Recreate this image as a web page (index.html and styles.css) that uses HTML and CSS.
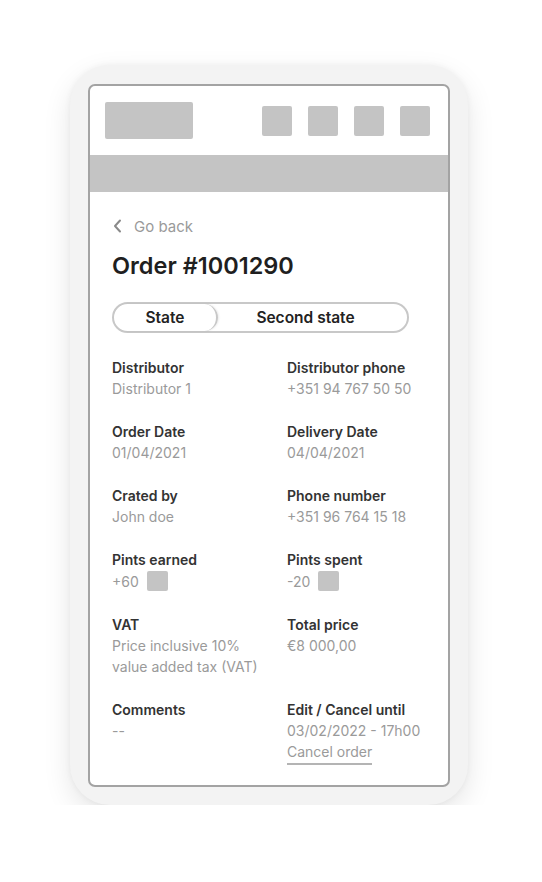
FILE: index.html
```html
<!DOCTYPE html>
<html lang="en">
<head>
  <meta charset="UTF-8" />
  <meta name="viewport" content="width=device-width, initial-scale=1" />
  <title>Order details</title>
  <link rel="stylesheet" href="styles.css">
</head>
<body>
  <div class="phone">
    <div class="screen">
      <header class="topbar">
        <div class="logo"></div>
        <div class="icons">
          <span class="icon"></span>
          <span class="icon"></span>
          <span class="icon"></span>
          <span class="icon"></span>
        </div>
      </header>
      <div class="subbar"></div>

      <main class="content">
        <a class="back" href="#">
          <svg width="9" height="14" viewBox="0 0 9 14"><path d="M7 1.5 L2 7 L7 12.5" fill="none" stroke="#8a8a8a" stroke-width="2" stroke-linecap="round" stroke-linejoin="round"/></svg>
          <span>Go back</span>
        </a>
        <h1>Order #1001290</h1>

        <div class="tabs">
          <div class="tab active">State</div>
          <div class="tab">Second state</div>
        </div>

        <div class="details">
          <div class="item">
            <div class="label">Distributor</div>
            <div class="value">Distributor 1</div>
          </div>
          <div class="item">
            <div class="label">Distributor phone</div>
            <div class="value">+351 94 767 50 50</div>
          </div>
          <div class="item">
            <div class="label">Order Date</div>
            <div class="value">01/04/2021</div>
          </div>
          <div class="item">
            <div class="label">Delivery Date</div>
            <div class="value">04/04/2021</div>
          </div>
          <div class="item">
            <div class="label">Crated by</div>
            <div class="value">John doe</div>
          </div>
          <div class="item">
            <div class="label">Phone number</div>
            <div class="value">+351 96 764 15 18</div>
          </div>
          <div class="item">
            <div class="label">Pints earned</div>
            <div class="value points">+60 <span class="badge"></span></div>
          </div>
          <div class="item">
            <div class="label">Pints spent</div>
            <div class="value points">-20 <span class="badge"></span></div>
          </div>
          <div class="item">
            <div class="label">VAT</div>
            <div class="value">Price inclusive 10%<br>value added tax (VAT)</div>
          </div>
          <div class="item">
            <div class="label">Total price</div>
            <div class="value">€8 000,00</div>
          </div>
          <div class="item">
            <div class="label">Comments</div>
            <div class="value">--</div>
          </div>
          <div class="item">
            <div class="label">Edit / Cancel until</div>
            <div class="value">03/02/2022 - 17h00</div>
            <a class="cancel" href="#">Cancel order</a>
          </div>
        </div>
      </main>
    </div>
  </div>
</body>
</html>
```

FILE: styles.css
```css
body {
  margin: 0;
  background: #ffffff;
  font-family: 'Inter', 'Noto Sans', sans-serif;
  color: #2b2b2b;
}

.phone {
  width: 398px;
  height: 740px;
  box-sizing: border-box;
  margin: 65px 0 0 70px;
  padding: 19px 18px 18px;
  background: #f3f3f3;
  border-radius: 40px;
  box-shadow: 0 10px 28px rgba(0,0,0,0.10), 0 0 6px rgba(0,0,0,0.05);
}

.screen {
  height: 703px;
  box-sizing: border-box;
  background: #ffffff;
  border: 2px solid #a3a3a3;
  border-radius: 7px;
  overflow: hidden;
}

.topbar {
  height: 69px;
  display: flex;
  align-items: center;
  justify-content: space-between;
  padding: 0 18px 0 15px;
}

.logo {
  width: 88px;
  height: 37px;
  background: #c4c4c4;
  border-radius: 2px;
}

.icons {
  display: flex;
  gap: 16px;
}

.icon {
  width: 30px;
  height: 30px;
  background: #c4c4c4;
  border-radius: 2px;
}

.subbar {
  height: 37px;
  background: #c4c4c4;
}

.content {
  padding: 24px 22px 0;
}

.back {
  display: flex;
  align-items: center;
  gap: 12px;
  height: 20px;
  font-size: 15px;
  color: #9a9a9a;
  text-decoration: none;
  padding-left: 1px;
}

h1 {
  margin: 15px 0 0;
  font-size: 23.5px;
  line-height: 30px;
  font-weight: 600;
  color: #1f1f1f;
}

.tabs {
  display: flex;
  width: 297px;
  height: 31px;
  box-sizing: border-box;
  margin-top: 21px;
  border: 2px solid #c8c8c8;
  border-radius: 16px;
}

.tab {
  flex: 1;
  display: flex;
  align-items: center;
  justify-content: center;
  padding-right: 14px;
  font-size: 15.5px;
  font-weight: 600;
  color: #222;
}

.tab.active {
  flex: 0 0 104px;
  box-sizing: border-box;
  padding-right: 0;
  border-right: 2px solid #c8c8c8;
  border-radius: 14px;
  box-shadow: 1px 0 2px rgba(0,0,0,0.08);
}

.details {
  display: grid;
  grid-template-columns: 175px 1fr;
  row-gap: 23px;
  margin-top: 25px;
}

.label {
  font-size: 14px;
  line-height: 20px;
  font-weight: 600;
  color: #333;
}

.value {
  font-size: 14px;
  line-height: 21px;
  color: #9a9a9a;
}

.points {
  display: flex;
  align-items: center;
  gap: 8px;
  height: 22px;
}

.badge {
  width: 21px;
  height: 20px;
  background: #c4c4c4;
  border-radius: 2px;
}

.cancel {
  display: inline-block;
  margin-top: 1px;
  font-size: 14px;
  line-height: 20px;
  padding-bottom: 1px;
  color: #9a9a9a;
  text-decoration: none;
  border-bottom: 2px solid #b4b4b4;
}
```
